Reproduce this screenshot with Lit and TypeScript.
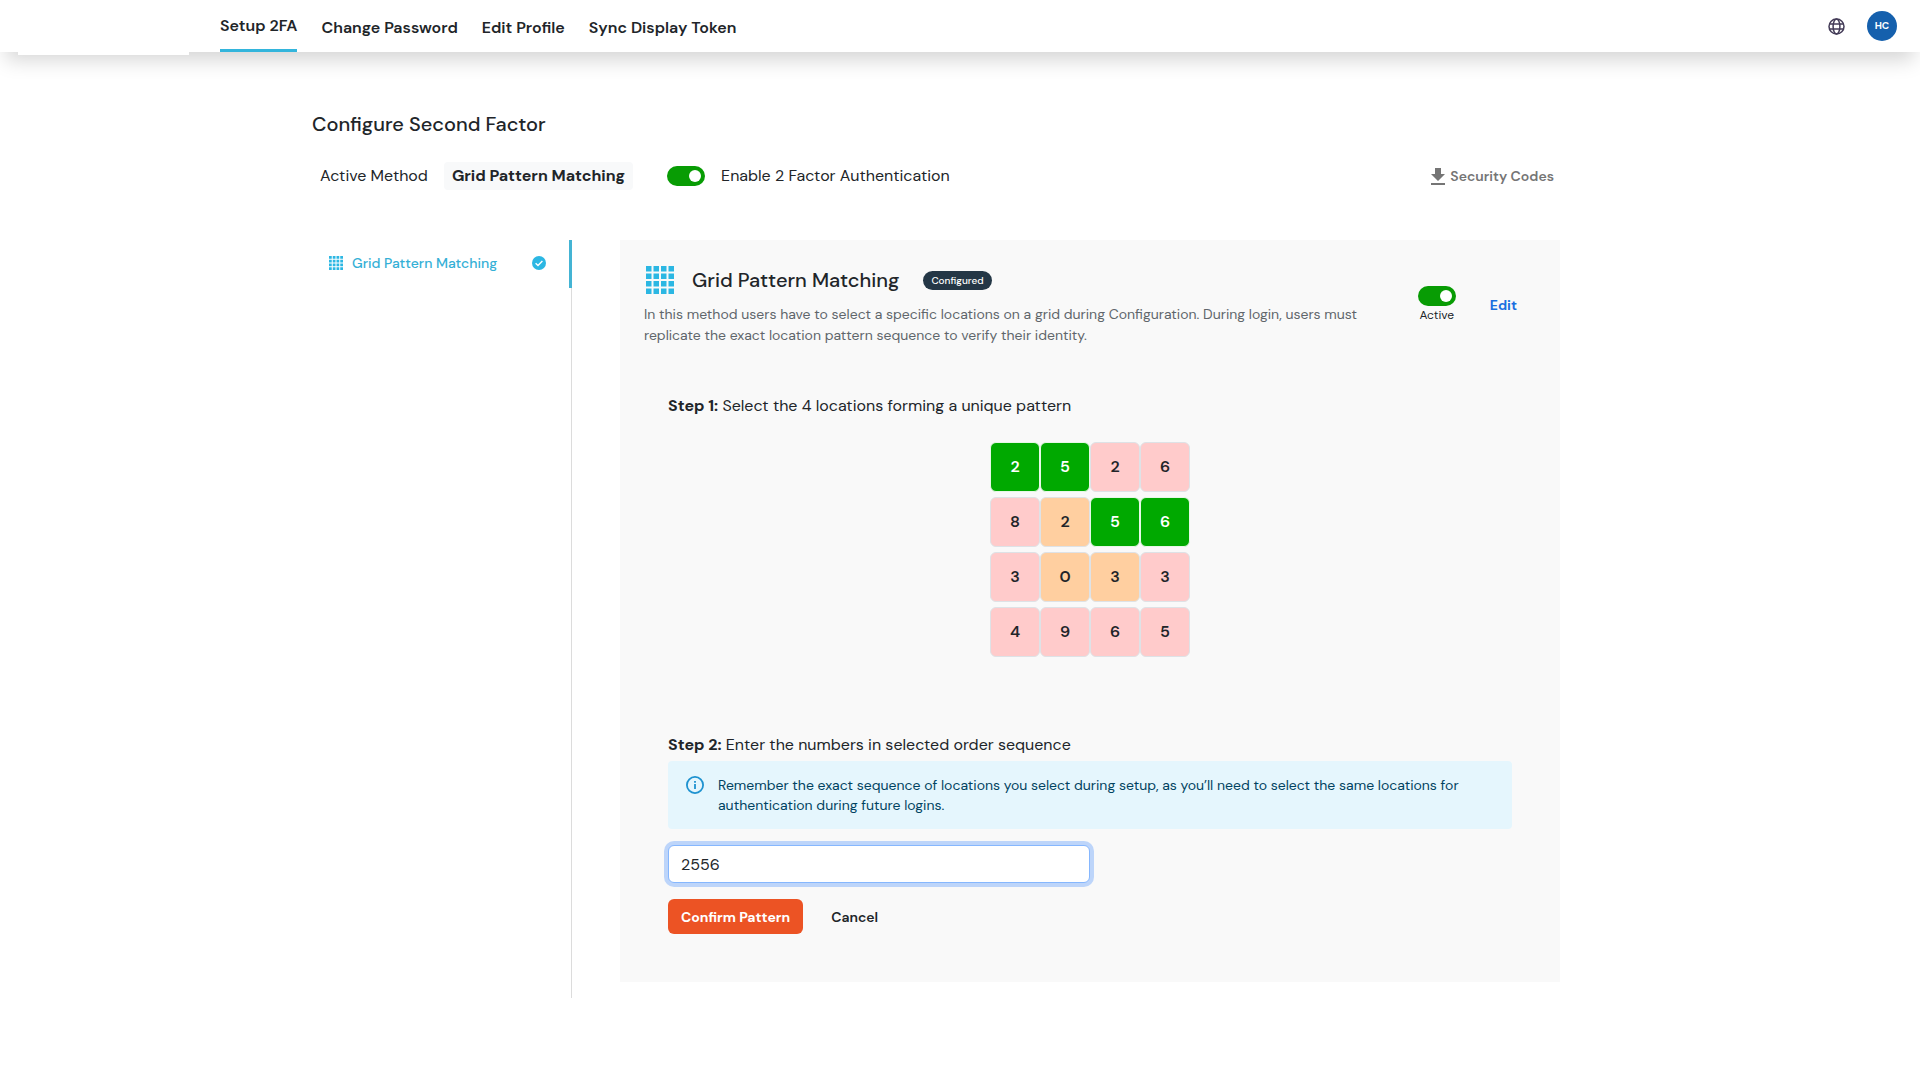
import { LitElement, html, css, svg } from "lit";
import { customElement, property, state } from "lit/decorators.js";
import { classMap } from "lit/directives/class-map.js";

type Tone = "picked" | "outer" | "inner";

interface Cell {
  value: number;
  tone: Tone;
}

const row = (values: number[], tones: Tone[]): Cell[] =>
  values.map((value, i) => ({ value, tone: tones[i] }));

const CELLS: Cell[] = [
  ...row([2, 5, 2, 6], ["picked", "picked", "outer", "outer"]),
  ...row([8, 2, 5, 6], ["outer", "inner", "picked", "picked"]),
  ...row([3, 0, 3, 3], ["outer", "inner", "inner", "outer"]),
  ...row([4, 9, 6, 5], ["outer", "outer", "outer", "outer"]),
];

const TABS = ["Setup 2FA", "Change Password", "Edit Profile", "Sync Display Token"];

@customElement("grid-icon")
export class GridIcon extends LitElement {
  static styles = css`
    :host {
      display: inline-flex;
      flex: none;
      color: #2cb7e3;
    }
    .icon {
      width: 100%;
      height: 100%;
      fill: currentColor;
    }
  `;

  render() {
    const steps = [0, 7.5, 15, 22.5];
    return html`<svg class="icon" viewBox="0 0 28 28" aria-hidden="true">
      ${steps.map((y) =>
        steps.map((x) => svg`<rect x=${x} y=${y} width="5.5" height="5.5" />`),
      )}
    </svg>`;
  }
}

@customElement("toggle-switch")
export class ToggleSwitch extends LitElement {
  static styles = css`
    :host {
      display: inline-flex;
    }
    .wrap {
      display: flex;
      align-items: center;
      gap: 16px;
      font-size: 16px;
      line-height: 24px;
      cursor: pointer;
    }
    .stacked {
      flex-direction: column;
      gap: 0;
      font-size: 12px;
      line-height: 18px;
    }
    .input {
      appearance: none;
      box-sizing: border-box;
      width: 38px;
      height: 20px;
      margin: 0;
      padding: 4px;
      border-radius: 10px;
      background: #b5b5b5;
      display: flex;
      cursor: pointer;
    }
    .input::before {
      content: "";
      width: 12px;
      height: 12px;
      border-radius: 50%;
      background: #fff;
    }
    .input:checked {
      background: #089c04;
      justify-content: flex-end;
    }
  `;

  @property() label = "";
  @property({ type: Boolean }) stacked = false;

  render() {
    return html`<label class=${classMap({ wrap: true, stacked: this.stacked })}>
      <input class="input" type="checkbox" role="switch" checked />
      <span>${this.label}</span>
    </label>`;
  }
}

@customElement("app-root")
export class AppRoot extends LitElement {
  static styles = css`
    :host {
      display: block;
      min-height: 100vh;
      background: #fff;
      color: #212529;
      font-family: "DM Sans", Inter, "Liberation Sans", sans-serif;
      font-size: 16px;
      line-height: 24px;
    }
    .header {
      display: flex;
      align-items: stretch;
      height: 52px;
      padding: 0 23px 0 18px;
      background: #fff;
      box-shadow: 0 14px 20px -6px rgba(0, 0, 0, 0.17);
    }
    .brand {
      width: 171px;
      height: 55px;
      margin-right: 31px;
      background: #fff;
    }
    .tabs {
      display: flex;
      gap: 24px;
      flex: 1;
    }
    .tab {
      display: flex;
      align-items: center;
      box-sizing: border-box;
      padding-top: 3px;
      color: inherit;
      font-weight: 600;
      text-decoration: none;
    }
    .tab.current {
      border-bottom: 3px solid #33b5dc;
    }
    .tools {
      display: flex;
      align-items: center;
      gap: 22px;
    }
    .plain {
      display: flex;
      padding: 0;
      border: 0;
      background: none;
      color: inherit;
      font: inherit;
      cursor: pointer;
    }
    .globe {
      width: 17px;
      height: 17px;
      fill: none;
      stroke: #443c58;
      stroke-width: 1.5;
    }
    .avatar {
      align-items: center;
      justify-content: center;
      width: 30px;
      height: 30px;
      border-radius: 50%;
      background: #1560ad;
      color: #fff;
      font-size: 10px;
      font-weight: 700;
      line-height: 16px;
    }
    .main {
      box-sizing: border-box;
      max-width: 1320px;
      margin: 0 auto;
      padding: 60px 60px 80px 12px;
    }
    .title {
      margin: 0;
      font-size: 20px;
      font-weight: 500;
      line-height: 24px;
    }
    .status {
      display: flex;
      align-items: center;
      margin: 26px 6px 50px 8px;
    }
    .method {
      margin: 0 34px 0 16px;
      padding: 2px 8px;
      border-radius: 4px;
      background: #f8f9fa;
      font-weight: 700;
    }
    .codes {
      align-items: center;
      gap: 5px;
      margin-left: auto;
      color: #757575;
      font-size: 14px;
      font-weight: 600;
      line-height: 20px;
    }
    .download {
      width: 14px;
      height: 17px;
      fill: currentColor;
    }
    .columns {
      display: grid;
      grid-template-columns: 260px minmax(0, 1fr);
      gap: 48px;
    }
    .side {
      border-right: 1px solid #dcdcdc;
    }
    .entry {
      display: flex;
      align-items: center;
      box-sizing: border-box;
      height: 48px;
      margin-right: -1px;
      padding: 0 23px 2px 17px;
      border-right: 3px solid #44b4d4;
      color: #35b0d6;
      font-size: 14px;
      font-weight: 500;
      text-decoration: none;
    }
    .entry-icon {
      width: 14px;
      height: 14px;
      margin-right: 9px;
    }
    .check {
      width: 14px;
      height: 14px;
      margin-left: auto;
    }
    .panel {
      margin-bottom: 16px;
      padding: 24px 48px 48px;
      background: #f9f9f9;
    }
    .head {
      display: flex;
      align-items: center;
      margin: 0 -5px 0 -24px;
    }
    .intro {
      flex: 1;
      max-width: 724px;
    }
    .name {
      display: flex;
      align-items: center;
    }
    .name-icon {
      width: 28px;
      height: 28px;
      margin: 0 18px 0 2px;
    }
    .subtitle {
      margin: 0 24px 0 0;
      font-size: 20px;
      font-weight: 500;
      line-height: 32px;
    }
    .tag {
      padding: 0 8px;
      border-radius: 10px;
      background: #243746;
      color: #fff;
      font-size: 10px;
      font-weight: 500;
      line-height: 19px;
    }
    .text {
      margin: 8px 0 0;
      color: #60666b;
      font-size: 14px;
      line-height: 21px;
    }
    .actions {
      display: flex;
      align-items: center;
      gap: 34px;
      margin-left: auto;
    }
    .edit {
      color: #1a6fe0;
      font-size: 14px;
      font-weight: 700;
      text-decoration: none;
    }
    .step {
      margin: 48px 0 0;
    }
    .keys {
      display: grid;
      grid-template-columns: repeat(4, 50px);
      justify-content: center;
      row-gap: 5px;
      margin: 24px 0 76px;
    }
    .key {
      box-sizing: border-box;
      height: 50px;
      padding: 0;
      border: 1px solid #dee2e6;
      border-radius: 6px;
      background: #ffcbcb;
      color: #212529;
      font: inherit;
      font-weight: 600;
      cursor: pointer;
    }
    .key.inner {
      background: #ffcfa0;
    }
    .key.picked {
      background: #00a900;
      border-color: #e6f8e6;
      color: #fff;
    }
    .note {
      display: flex;
      gap: 14px;
      margin: 4px 0 16px;
      padding: 14px 18px;
      border-radius: 4px;
      background: #e5f6fd;
      color: #014361;
      font-size: 14px;
      line-height: 20px;
    }
    .info {
      flex: none;
      width: 18px;
      height: 18px;
      margin-top: 1px;
      fill: none;
      stroke: #1e92d0;
      stroke-width: 1.8;
    }
    .note-text {
      margin: 0;
      max-width: 760px;
    }
    .code {
      display: block;
      box-sizing: border-box;
      width: 50%;
      height: 38px;
      padding: 0 12px;
      border: 1px solid #86b7fe;
      border-radius: 6px;
      outline: none;
      background: #fff;
      box-shadow: 0 0 0 4px #bdd5fa;
      color: inherit;
      font: inherit;
    }
    .buttons {
      display: flex;
      gap: 15px;
      margin-top: 16px;
    }
    .button {
      height: 35px;
      padding: 0 13px;
      border: 0;
      border-radius: 6px;
      background: none;
      color: inherit;
      font: inherit;
      font-size: 14px;
      font-weight: 600;
      cursor: pointer;
    }
    .button.primary {
      background: #ec5324;
      color: #fff;
      font-weight: 700;
    }
  `;

  @state() private code = "2556";

  private onInput(event: Event) {
    this.code = (event.target as HTMLInputElement).value;
  }

  private renderHeader() {
    return html`<header class="header">
      <div class="brand"></div>
      <nav class="tabs">
        ${TABS.map(
          (tab, i) =>
            html`<a class=${classMap({ tab: true, current: i === 0 })} href="#">${tab}</a>`,
        )}
      </nav>
      <div class="tools">
        <button class="plain" aria-label="Language">
          <svg class="globe" viewBox="0 0 17 17">
            <circle cx="8.5" cy="8.5" r="7.5" />
            <ellipse cx="8.5" cy="8.5" rx="3.4" ry="7.5" />
            <path d="M1.6 6h13.8M1.6 11h13.8" />
          </svg>
        </button>
        <button class="plain avatar">HC</button>
      </div>
    </header>`;
  }

  private renderPanel() {
    return html`<section class="panel">
      <div class="head">
        <div class="intro">
          <div class="name">
            <grid-icon class="name-icon"></grid-icon>
            <h2 class="subtitle">Grid Pattern Matching</h2>
            <span class="tag">Configured</span>
          </div>
          <p class="text">
            In this method users have to select a specific locations on a grid during
            Configuration. During login, users must replicate the exact location pattern
            sequence to verify their identity.
          </p>
        </div>
        <div class="actions">
          <toggle-switch label="Active" stacked></toggle-switch>
          <a class="edit" href="#">Edit</a>
        </div>
      </div>

      <p class="step"><b>Step 1:</b> Select the 4 locations forming a unique pattern</p>
      <div class="keys">
        ${CELLS.map(
          (cell) => html`<button class="key ${cell.tone}">${cell.value}</button>`,
        )}
      </div>

      <label for="code"><b>Step 2:</b> Enter the numbers in selected order sequence</label>
      <div class="note">
        <svg class="info" viewBox="0 0 18 18" aria-hidden="true">
          <circle cx="9" cy="9" r="8.1" />
          <path d="M9 8v5M9 5v1.7" />
        </svg>
        <p class="note-text">
          Remember the exact sequence of locations you select during setup, as you’ll need to
          select the same locations for authentication during future logins.
        </p>
      </div>
      <input id="code" class="code" type="text" .value=${this.code} @input=${this.onInput} />
      <div class="buttons">
        <button class="button primary">Confirm Pattern</button>
        <button class="button">Cancel</button>
      </div>
    </section>`;
  }

  render() {
    return html`${this.renderHeader()}
      <main class="main">
        <h1 class="title">Configure Second Factor</h1>
        <div class="status">
          <span>Active Method</span>
          <span class="method">Grid Pattern Matching</span>
          <toggle-switch label="Enable 2 Factor Authentication"></toggle-switch>
          <button class="plain codes">
            <svg class="download" viewBox="0 0 14 17" aria-hidden="true">
              <path d="M4 0h6v6h4l-7 7-7-7h4zM0 15h14v2H0z" />
            </svg>
            Security Codes
          </button>
        </div>
        <div class="columns">
          <nav class="side">
            <a class="entry" href="#">
              <grid-icon class="entry-icon"></grid-icon>
              Grid Pattern Matching
              <svg class="check" viewBox="0 0 14 14" aria-hidden="true">
                <circle cx="7" cy="7" r="7" fill="#2cb7e3" />
                <path d="M3.6 7.2l2.4 2.3 4.4-4.6" fill="none" stroke="#fff" stroke-width="1.4" />
              </svg>
            </a>
          </nav>
          ${this.renderPanel()}
        </div>
      </main>`;
  }
}
